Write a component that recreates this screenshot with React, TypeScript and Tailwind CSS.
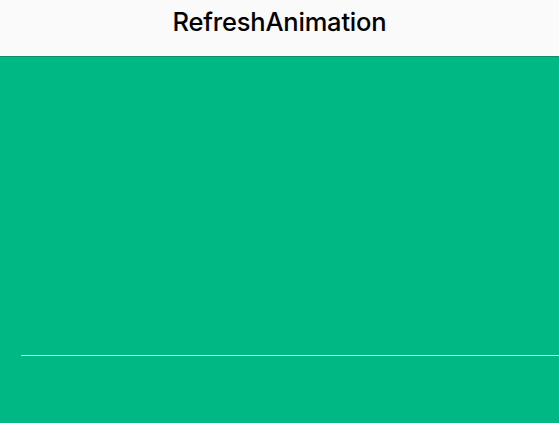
import React from "react";

const App = () => {
  return (
    <div className="flex h-screen w-full flex-col bg-[#00b884]" style={{ fontFamily: "Inter, 'Noto Sans', sans-serif" }}>
      <div className="flex h-[56px] shrink-0 justify-center bg-[#fafafa] pt-[7px]">
        <h1 className="text-[25.5px] font-medium leading-[30px] tracking-[-0.2px] text-black">RefreshAnimation</h1>
      </div>
      <div className="flex flex-1 flex-col border-t border-[#0a8f64]">
        <div className="h-[298px]" />
        <div className="ml-[21px] h-px bg-[#c9eedc]" />
      </div>
    </div>
  );
};

export default App;
